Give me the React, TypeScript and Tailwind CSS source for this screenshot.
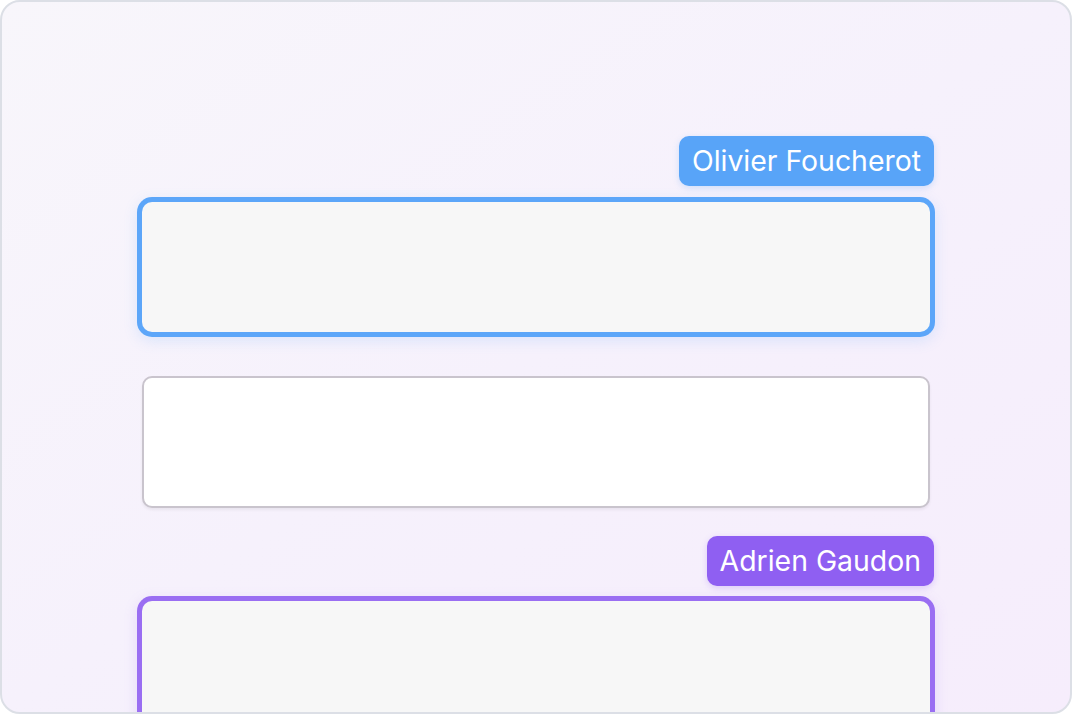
export default function App() {
  return (
    <div className="h-[714px] w-[1072px] overflow-hidden bg-white" style={{ fontFamily: "Inter, 'Noto Sans', sans-serif" }}>
      <div className="h-full w-full overflow-hidden rounded-[20px] border-2 border-[#dcdfe6] bg-gradient-to-br from-[#f8f6fb] via-[#f6f1fc] to-[#f6edfc]">
        <div className="mx-auto flex w-[788px] flex-col pt-[134px]">
          <div className="flex flex-col items-end">
            <span className="-mr-[4px] mb-[16px] flex h-[50px] items-center rounded-[10px] bg-[#58a4f8] px-[13px] text-[28.4px] text-white shadow-[0_2px_6px_rgba(88,164,248,0.25)]">
              Olivier Foucherot
            </span>
            <div className="h-[130px] w-full rounded-[10px] bg-[#f7f7f7] shadow-[0_0_0_5px_#5ca6f9,0_4px_14px_5px_rgba(92,166,249,0.18)]" />
          </div>
          <div className="mt-[44px] h-[132px] w-full rounded-[10px] border-2 border-[#c9c4cd] bg-white shadow-[0_2px_3px_rgba(0,0,0,0.06)]" />
          <div className="mt-[28px] flex flex-col items-end">
            <span className="-mr-[4px] mb-[15px] flex h-[50px] items-center rounded-[10px] bg-[#8f5ff2] px-[13px] text-[28.4px] text-white shadow-[0_2px_6px_rgba(143,95,242,0.25)]">
              Adrien Gaudon
            </span>
            <div className="h-[130px] w-full rounded-[10px] bg-[#f7f7f7] shadow-[0_0_0_5px_#9a6ef2,0_4px_14px_5px_rgba(154,110,242,0.18)]" />
          </div>
        </div>
      </div>
    </div>
  );
}
